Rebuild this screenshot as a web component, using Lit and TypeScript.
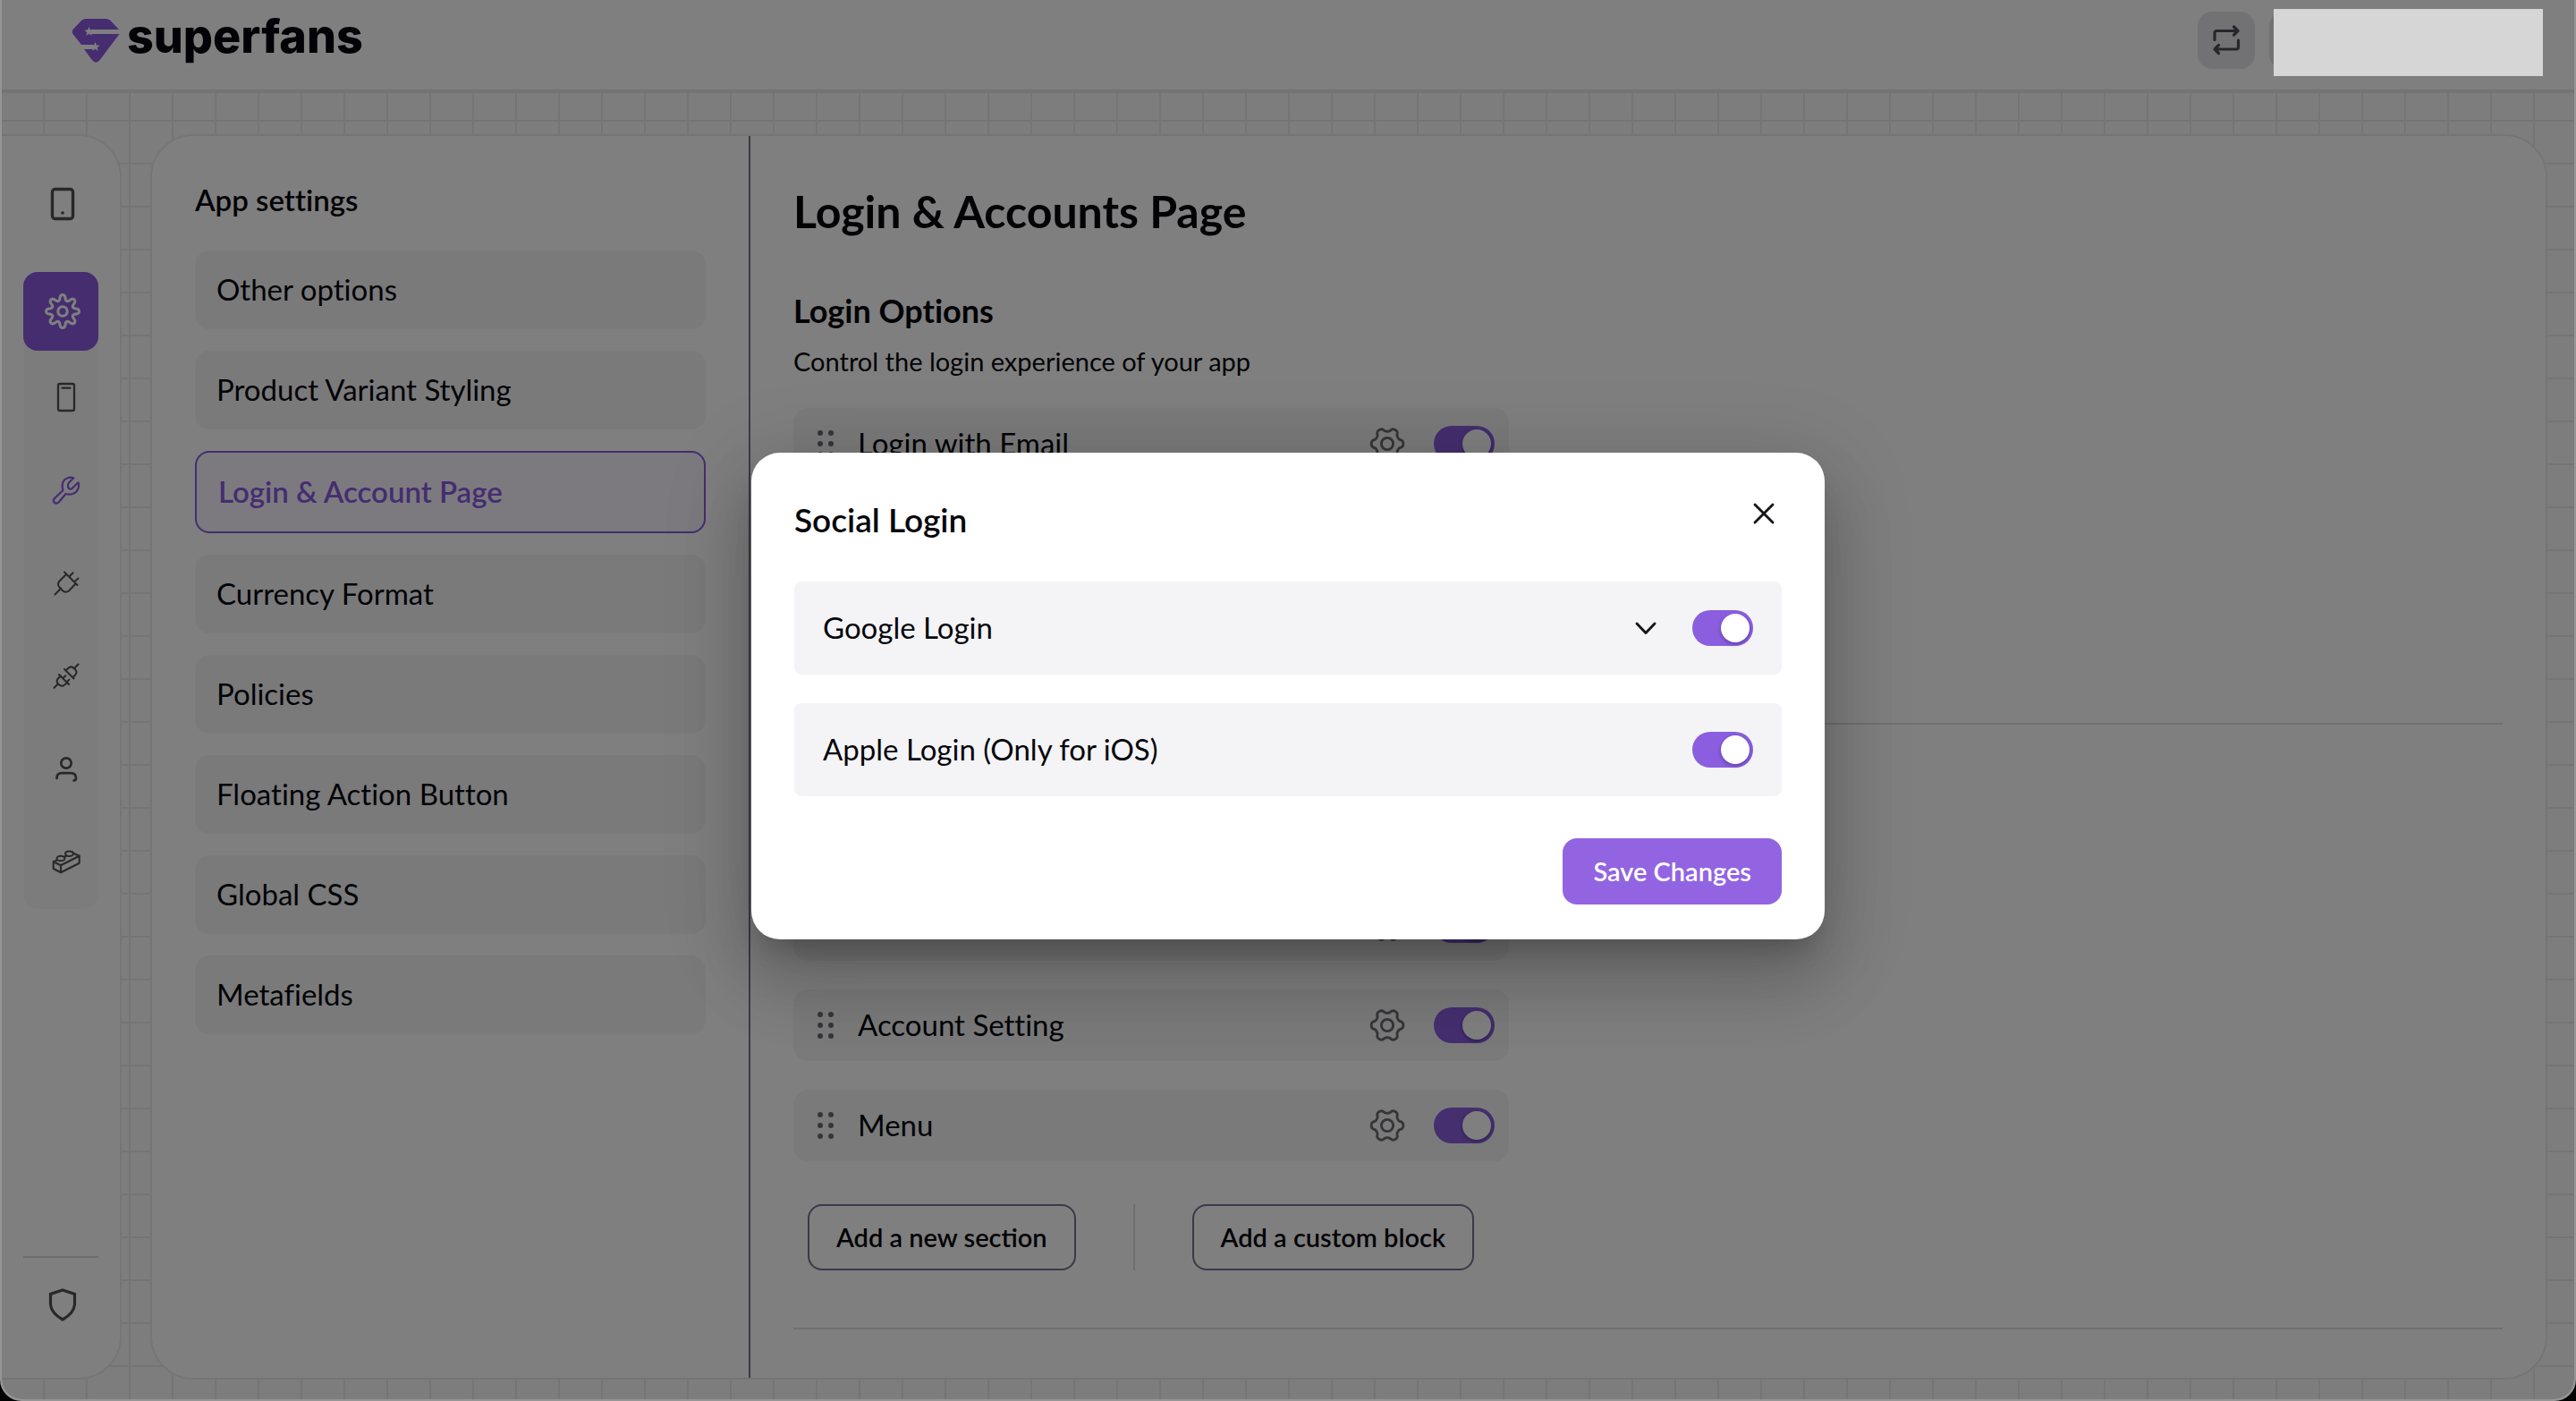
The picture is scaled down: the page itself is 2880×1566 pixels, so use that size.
import { LitElement, html, css, svg, nothing } from "lit";
import { customElement, property } from "lit/decorators.js";
import { classMap } from "lit/directives/class-map.js";

/** Closed outline of a rounded cog with the given number of lobes. */
function cogPath(c: number, base: number, swing: number, lobes: number, sharp: number): string {
  const pts: string[] = [];
  const steps = 240;
  for (let i = 0; i < steps; i++) {
    const t = (i / steps) * Math.PI * 2;
    const r = base + (swing * Math.tanh(sharp * Math.cos(lobes * t))) / Math.tanh(sharp);
    pts.push(`${(c + r * Math.cos(t)).toFixed(2)} ${(c + r * Math.sin(t)).toFixed(2)}`);
  }
  return `M${pts.join("L")}Z`;
}

const star = "M0-5.5 1.500-1.900 5.200-1.700 2.200.7 3.200 4.400 0 2.300-3.200 4.400-2.200.7-5.200-1.700-1.500-1.900Z";

const icons = {
  phone: svg`<rect x="8.500" y="3.500" width="23" height="33" rx="3" stroke-width="3.400"/><circle cx="20" cy="30" r="1.800" fill="currentColor" stroke="none"/>`,
  cog: svg`<path d=${cogPath(20, 15.4, 3, 8, 1.3)} stroke-width="3.100"/><circle cx="20" cy="20" r="5.200" stroke-width="3.100"/>`,
  device: svg`<rect x="11" y="5" width="18" height="30" rx="2" stroke-width="2.300"/><path d="M15.500 9.700h9" stroke-width="2.300"/>`,
  wrench: svg`<path stroke-width="2.200" d="M28.300 6.300 23 11.500Q21.500 13 22 16 22.500 19 26 18.500L33.500 11.300Q35.500 16 31.500 21.500 26.500 26 19.500 24L12 33Q9.500 35.500 7 34 4.500 31.500 7 29L16.500 20Q14 12.500 18.500 8 23 4.500 28.300 6.300Z"/>`,
  plug: svg`<path stroke-width="2" d="M18 7.500 32.500 22M20 10l-7.500 7.500q-3 3.500 0 7l3 3.300q3.500 3.500 7.500.7L30 21M23.500 12.500 27.500 8.200M29 18.500 33.500 14.500M14.300 25.500 7.500 32.500"/>`,
  plugs: svg`<path stroke-width="2.100" d="M12 18l11 11M14 19.500l-3.200 3q-2.300 3 0 5.700 2.500 3.300 6 2.300L21.500 27M17 21.500l2.300-2.200M21 26l2.300-2.200M10.800 28.500 6.500 32.800M18 12 28.500 22.500M20 13l3-2.700q2.500-1.800 5 0 3.500 2.500 3.500 5.500 0 1.500-4 5.500M29 11 33.500 6.500"/>`,
  user: svg`<circle cx="20" cy="13" r="5.700" stroke-width="2.700"/><path stroke-width="2.700" d="M9.500 30q0-5.800 5.500-5.800h10q6 0 6 5.300 0 3-2.500 3"/>`,
  brick: svg`<path stroke-width="2.100" d="M10 17.500 5.700 19.300 14 23.300 34.700 12.700V20.700L14 31.300 5.700 27V19.300M14 23.300v8M27.500 9.500l7.200 3.200M17.500 14l3-1.500"/><ellipse cx="14" cy="15.500" rx="4.500" ry="2.800"/><ellipse cx="23.500" cy="10.200" rx="4.500" ry="2.800"/>`,
  shield: svg`<path stroke-width="3.200" stroke-linejoin="miter" d="M20 4 33.500 8.500V20q-.5 9.500-13.500 17Q7 29.500 6.500 20V8.500Z"/>`,
  swap: svg`<path stroke-width="3.200" d="M7 19.500V12q0-2.500 2.500-2.500H33M28.500 5 33 9.500 28.500 14M33.500 20v7.500q0 2.500-2.500 2.500H7M11.500 25.500 7 30l4.500 4.500"/>`,
  gear: svg`<path d=${cogPath(20, 15.8, 2, 6, 1.6)} stroke-width="2.900"/><circle cx="20" cy="20" r="6.600" stroke-width="2.900"/>`,
  close: svg`<path stroke-width="2.900" d="M10 10 30 30M30 10 10 30"/>`,
  chevron: svg`<path stroke-width="2.900" d="M10 15 20 25.500 30 15"/>`,
};
type IconName = keyof typeof icons;

@customElement("sf-icon")
class SfIcon extends LitElement {
  @property() name: IconName = "cog";
  static styles = css`
    :host { display: inline-flex; }
    .icon { width: 40px; height: 40px; fill: none; stroke: currentColor; stroke-width: 2; stroke-linecap: round; stroke-linejoin: round; }
  `;
  render() {
    return html`<svg class="icon" viewBox="0 0 40 40" aria-hidden="true">${icons[this.name]}</svg>`;
  }
}

@customElement("sf-toggle")
class SfToggle extends LitElement {
  @property() label = "";
  static styles = css`
    :host { display: inline-flex; }
    .toggle {
      appearance: none; margin: 0; width: 68px; height: 40px; border-radius: 20px; padding: 4px;
      display: flex; background: #c9c9d2; cursor: pointer;
    }
    .toggle::before {
      content: ""; width: 32px; height: 32px; border-radius: 50%; background: #fff;
      box-shadow: 0 2px 4px rgba(39, 20, 80, 0.4);
    }
    .toggle:checked { background: #8a5edf; justify-content: flex-end; }
  `;
  render() {
    return html`<input class="toggle" type="checkbox" role="switch" checked aria-label=${this.label} />`;
  }
}

@customElement("sf-block-row")
class SfBlockRow extends LitElement {
  @property() label = "";
  static styles = css`
    :host { display: block; }
    .row { display: flex; align-items: center; height: 80px; max-width: 800px; box-sizing: border-box; padding: 0 16px 0 26px; border-radius: 16px; background: #f4f4f6; }
    .grip { width: 20px; height: 32px; fill: #6c6c70; margin-right: 26px; }
    .name { flex: 1; padding-bottom: 2px; font-size: 33px; line-height: 40px; color: #07070c; }
    .gear { border: 0; padding: 0; margin-right: 32px; background: none; color: #6c6c70; display: flex; cursor: pointer; }
  `;
  render() {
    return html`<div class="row">
      <svg class="grip" viewBox="0 0 20 32" aria-hidden="true">
        ${[4, 16, 28].map((y) => svg`<circle cx="4" cy=${y} r="3"/><circle cx="16" cy=${y} r="3"/>`)}
      </svg>
      <span class="name">${this.label}</span>
      <button class="gear" aria-label="Settings"><sf-icon name="gear"></sf-icon></button>
      <sf-toggle label=${this.label || "Enabled"}></sf-toggle>
    </div>`;
  }
}

const settings = [
  "Other options",
  "Product Variant Styling",
  "Login & Account Page",
  "Currency Format",
  "Policies",
  "Floating Action Button",
  "Global CSS",
  "Metafields",
];

const tools: { icon: IconName; label: string; active?: boolean }[] = [
  { icon: "device", label: "App" },
  { icon: "wrench", label: "Configure", active: true },
  { icon: "plug", label: "Plugins" },
  { icon: "plugs", label: "Integrations" },
  { icon: "user", label: "Account" },
  { icon: "brick", label: "Blocks" },
];

@customElement("app-root")
class AppRoot extends LitElement {
  static styles = css`
    :host { display: block; background: #000; color: #07070c; font-family: Lato, "Noto Sans", sans-serif; font-variant-ligatures: none; }
    * { box-sizing: border-box; }
    h1, h2, h3, p { margin: 0; }
    button { font-family: inherit; cursor: pointer; }
    .window {
      position: relative; display: flex; flex-direction: column; height: 100vh; overflow: hidden;
      border: 2px solid #959595; border-top: 0; border-radius: 0 0 24px 24px;
      background-color: #fafafa;
      background-image: linear-gradient(to right, transparent 46px, #ebebeb 46px), linear-gradient(to bottom, transparent 46px, #ebebeb 46px);
      background-size: 48px 48px;
      background-position: 0 40px;
    }
    .topbar { flex: none; height: 104px; padding: 13px 48px 0 78px; display: flex; align-items: flex-start; background: #fff; border-bottom: 4px solid #e9e9e9; }
    .brand { display: flex; align-items: flex-start; gap: 8px; color: #07050e; text-decoration: none; font-family: Inter, sans-serif; font-size: 52px; line-height: 56px; font-weight: 800; }
    .mark { width: 54px; height: 50px; margin-top: 7px; flex: none; }
    .actions { margin-left: auto; display: flex; gap: 16px; }
    .action { height: 64px; width: 64px; border: 0; border-radius: 16px; background: #e5e5ea; color: #4c4c58; display: flex; align-items: center; justify-content: center; padding: 0; }
    .wide { width: 293px; }
    .body { flex: 1; min-height: 0; display: flex; gap: 32px; padding: 46px 30px 22px 0; }

    .side { flex: none; width: 134px; display: flex; flex-direction: column; padding: 32px 24px 30px; background: #fff; border: 2px solid #ebebeb; border-left: 0; border-radius: 0 48px 48px 0; color: #505050; }
    .link { height: 88px; border-radius: 16px; display: flex; align-items: center; justify-content: center; padding-left: 4px; color: inherit; }
    .link.active { background: #8a5ae0; color: #fff; }
    .group { margin-top: 32px; background: #f9f9fb; border-radius: 16px; }
    .tool { height: 104px; display: flex; align-items: center; justify-content: center; padding-left: 12px; color: inherit; }
    .tool.active { color: #8a5ae0; }
    .bottom { margin-top: auto; border-top: 2px solid #dadada; }
    .bottom .link { height: 104px; padding-left: 3px; }

    .panel { flex: 1; min-width: 0; display: flex; overflow: hidden; background: #fff; border: 2px solid #ebebeb; border-radius: 48px; }
    .menu { flex: 0 0 25%; padding: 48px; border-right: 2px solid #787a8a; }
    .menu-title { font-size: 33px; line-height: 46px; font-weight: 600; margin-bottom: 34px; }
    .items { display: flex; flex-direction: column; gap: 24px; }
    .item { display: flex; align-items: center; height: 88px; padding: 0 24px 2px; border-radius: 16px; background: #f5f5f7; font-size: 33px; line-height: 40px; color: #07070c; text-decoration: none; }
    .item.active { height: 92px; border: 2px solid #8a5ae0; background: #f9f4ff; color: #8a5ae0; font-weight: 600; }

    .content { flex: 1; min-width: 0; padding: 48px; overflow: hidden; }
    .title { font-size: 50px; line-height: 72px; font-weight: 700; margin-bottom: 48px; }
    .subtitle { font-size: 36px; line-height: 54px; font-weight: 700; margin-bottom: 8px; }
    .hint { font-size: 29px; line-height: 44px; margin-bottom: 30px; }
    .section { border-bottom: 2px solid #e0e0e2; }
    .login { min-height: 490px; }
    .account { padding: 184px 0 64px; }
    .rows { display: flex; flex-direction: column; gap: 32px; }
    .adders { display: flex; gap: 64px; padding-left: 16px; margin-top: 48px; }
    .add { height: 74px; padding: 0 30px 2px; background: #fff; border: 2px solid #76708f; border-radius: 16px; font-size: 29px; font-weight: 600; color: #07070c; }
    .rule { width: 2px; background: #dcdce0; }

    .overlay { position: absolute; inset: 0; display: grid; place-items: center; padding-bottom: 8px; background: rgba(0, 0, 0, 0.5); }
    .dialog {
      width: 100%; max-width: 1200px; padding: 46px 48px 39px; background: #fff; border-radius: 32px;
      box-shadow: 0 22px 30px -14px rgba(0, 0, 0, 0.2), 0 48px 76px 6px rgba(0, 0, 0, 0.14), 0 18px 92px 16px rgba(0, 0, 0, 0.12);
    }
    .head { display: flex; justify-content: space-between; align-items: flex-start; margin-bottom: 42px; }
    .head-title { font-size: 37px; line-height: 54px; padding-top: 2px; font-weight: 600; }
    .icon-button { width: 40px; height: 44px; padding: 0; border: 0; background: none; color: #15151a; display: flex; align-items: center; justify-content: center; }
    .logins { display: flex; flex-direction: column; gap: 32px; }
    .login-row { display: flex; align-items: center; gap: 32px; height: 104px; padding: 0 32px; border-radius: 8px; background: #f4f4f7; }
    .login-name { flex: 1; padding-bottom: 2px; font-size: 33px; line-height: 40px; }
    .foot { display: flex; justify-content: flex-end; margin-top: 47px; }
    .save { height: 74px; padding: 0 34px 2px; border: 0; border-radius: 16px; background: #9264e2; color: #fff; font-size: 29px; font-weight: 600; }
    .mask { position: absolute; top: 10px; right: 35px; width: 301px; height: 75px; background: #d6d6d6; }
  `;

  render() {
    return html`
      <div class="window">
        <header class="topbar">
          <a class="brand" href="#">
            <svg class="mark" viewBox="81 20 54 50" aria-hidden="true">
              <path fill="#8a5ae0" d="M97 21h22q3 0 5 1.500L134 33H103v5h31.500L113 66.500q-4.500 6.500-9.500 0L95 55h10V50H92L82.500 38q-1.500-2.500 0-5L92 23q2.500-2 5-2Z"/>
              <path fill="#fff" d=${star} transform="translate(100.500 35.500)"/>
              <path fill="#fff" d=${star} transform="translate(107.500 52.500)"/>
            </svg>
            superfans
          </a>
          <div class="actions">
            <button class="action" aria-label="Switch"><sf-icon name="swap"></sf-icon></button>
            <button class="action wide" aria-label="Profile"></button>
          </div>
        </header>
        <div class="body">
          <nav class="side" aria-label="Main">
            <a class="link" href="#" aria-label="Preview"><sf-icon name="phone"></sf-icon></a>
            <div class="group">
              <a class="link active" href="#" aria-label="Settings"><sf-icon name="cog"></sf-icon></a>
              ${tools.map(
                (t) => html`<a class=${classMap({ tool: true, active: !!t.active })} href="#" aria-label=${t.label}><sf-icon name=${t.icon}></sf-icon></a>`
              )}
            </div>
            <div class="bottom">
              <a class="link" href="#" aria-label="Security"><sf-icon name="shield"></sf-icon></a>
            </div>
          </nav>
          <main class="panel">
            <nav class="menu" aria-label="App settings">
              <h2 class="menu-title">App settings</h2>
              <div class="items">
                ${settings.map((s, i) => html`<a class=${classMap({ item: true, active: i === 2 })} aria-current=${i === 2 ? "page" : nothing} href="#">${s}</a>`)}
              </div>
            </nav>
            <div class="content">
              <h1 class="title">Login &amp; Accounts Page</h1>
              <section class="section login">
                <h2 class="subtitle">Login Options</h2>
                <p class="hint">Control the login experience of your app</p>
                <sf-block-row label="Login with Email"></sf-block-row>
              </section>
              <section class="section account">
                <div class="rows">
                  <sf-block-row></sf-block-row>
                  <sf-block-row label="Account Setting"></sf-block-row>
                  <sf-block-row label="Menu"></sf-block-row>
                </div>
                <div class="adders">
                  <button class="add">Add a new section</button>
                  <span class="rule"></span>
                  <button class="add">Add a custom block</button>
                </div>
              </section>
            </div>
          </main>
        </div>
        <div class="overlay">
          <div class="dialog" role="dialog" aria-modal="true" aria-labelledby="dialog-title">
            <div class="head">
              <h2 class="head-title" id="dialog-title">Social Login</h2>
              <button class="icon-button" aria-label="Close"><sf-icon name="close"></sf-icon></button>
            </div>
            <div class="logins">
              <div class="login-row">
                <span class="login-name">Google Login</span>
                <button class="icon-button" aria-label="Expand"><sf-icon name="chevron"></sf-icon></button>
                <sf-toggle label="Google Login"></sf-toggle>
              </div>
              <div class="login-row">
                <span class="login-name">Apple Login (Only for iOS)</span>
                <sf-toggle label="Apple Login"></sf-toggle>
              </div>
            </div>
            <div class="foot"><button class="save">Save Changes</button></div>
          </div>
        </div>
        <div class="mask"></div>
      </div>
    `;
  }
}
